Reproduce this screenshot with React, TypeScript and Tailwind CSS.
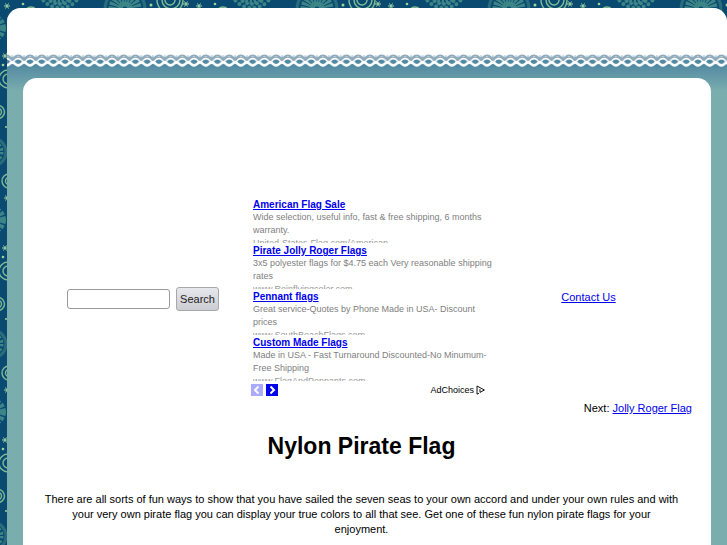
const ads = [
  {
    title: "American Flag Sale",
    text: "Wide selection, useful info, fast & free shipping, 6 months warranty.",
    url: "United-States-Flag.com/American",
  },
  {
    title: "Pirate Jolly Roger Flags",
    text: "3x5 polyester flags for $4.75 each Very reasonable shipping rates",
    url: "www.Reinflyingcolor.com",
  },
  {
    title: "Pennant flags",
    text: "Great service-Quotes by Phone Made in USA- Discount prices",
    url: "www.SouthBeachFlags.com",
  },
  {
    title: "Custom Made Flags",
    text: "Made in USA - Fast Turnaround Discounted-No Minumum-Free Shipping",
    url: "www.FlagAndPennants.com",
  },
];

const Star = ({ x, y }: { x: number; y: number }) => (
  <path
    d={`M${x - 3} ${y}h6M${x - 1.5} ${y - 2.5}l3 5M${x + 1.5} ${y - 2.5}l-3 5`}
    stroke="#9fd0a0"
    strokeWidth="1"
  />
);

// repeating batik print behind the page
const Backdrop = () => (
  <svg className="absolute inset-0 -z-10 h-full w-full" aria-hidden="true">
    <defs>
      <pattern id="batik" width="192" height="192" patternUnits="userSpaceOnUse">
        <rect width="192" height="192" fill="#0b4a70" />
        <g fill="none" stroke="#3b8587">
          {/* dotted flower */}
          <circle cx="60" cy="-12" r="16" strokeWidth="4" strokeDasharray="0 5" strokeLinecap="round" />
          <circle cx="60" cy="-14" r="22" strokeWidth="4" strokeDasharray="0 5.3" strokeLinecap="round" />
          <circle cx="60" cy="-9" r="9" strokeWidth="8" strokeDasharray="2 1.5" />
          {/* sun wheel */}
          <circle cx="125" cy="9" r="20" strokeWidth="3" stroke="#2a6b7c" />
          <circle cx="125" cy="9" r="11" strokeWidth="11" strokeDasharray="2.4 1" />
          <circle cx="125" cy="9" r="5" strokeWidth="5" />
          {/* half medallion on the left edge */}
          <circle cx="-8" cy="152" r="14" strokeWidth="3" stroke="#2a6b7c" />
          <circle cx="-8" cy="152" r="8" strokeWidth="7" strokeDasharray="2 1.6" />
          <circle cx="-8" cy="28" r="8" strokeWidth="12" strokeDasharray="2.4 1" />
        </g>
        <g fill="none" stroke="#7fbb97" strokeWidth="1.4">
          <circle cx="170" cy="0" r="13" />
          <circle cx="171" cy="0" r="9" />
          <circle cx="170" cy="0" r="5" />
          <circle cx="31" cy="13" r="6" />
          <circle cx="8" cy="79" r="9" />
          <circle cx="8" cy="79" r="5" />
          <circle cx="-2" cy="112" r="6.5" />
          <circle cx="-2" cy="112" r="3.5" />
          <circle cx="9" cy="181" r="7" />
          <circle cx="9" cy="181" r="3.5" />
        </g>
        <g fill="#9fd0a0">
          <circle cx="151" cy="5" r="1.5" />
          <circle cx="23" cy="4" r="1.3" />
          <circle cx="3" cy="65" r="1.3" />
          <circle cx="6" cy="127" r="1" />
        </g>
        <Star x={7} y={6} />
        <Star x={186} y={4} />
        <Star x={5} y={56} />
      </pattern>
    </defs>
    <rect width="100%" height="100%" fill="url(#batik)" />
  </svg>
);

const Lace = () => (
  <svg className="block h-[13px] w-full" aria-hidden="true">
    <defs>
      <pattern id="lace" x="5.4" width="11.72" height="13" patternUnits="userSpaceOnUse">
        <rect width="11.72" height="13" fill="#fff" />
        <path d="M0 3h11.72v5H0z" fill="#8eabbb" />
        <path d="M0 7.5h11.72V13H0z" fill="#5089a2" />
        <path d="M1.6 3.6Q5.86-.6 10.1 3.6" fill="none" stroke="#8eabbb" strokeWidth="2" />
        <path d="M.5 1.2v2M11.2 1.2v2" stroke="#c5d2db" />
        <path d="M0 7Q1.6 6.8 2.6 5 5.86 2.4 9.1 5 10 6.8 11.72 7V9.8Q10 10.2 9 11.6 5.86 14 2.7 11.6 1.7 10.2 0 9.8z" fill="#fff" />
        <path d="M2.2 7.6Q3.6 5.4 5.86 5.4T9.5 7.6Q8.2 10 5.86 10T2.2 7.6z" fill="#5089a2" />
      </pattern>
    </defs>
    <rect width="100%" height="13" fill="url(#lace)" />
  </svg>
);

const SearchForm = () => (
  <form className="flex items-center justify-center gap-1.5 pt-1 pl-1" onSubmit={(e) => e.preventDefault()}>
    <input
      type="text"
      aria-label="Search"
      className="h-5 w-[103px] rounded-[3px] border border-[#999] bg-white px-1 text-xs"
    />
    <button
      type="submit"
      className="h-6 w-[43px] rounded-[3px] border border-[#a8a8a8] bg-linear-to-b from-[#e6e8ee] to-[#cccdd2] text-[11px] text-[#222]"
    >
      Search
    </button>
  </form>
);

const AdBlock = () => (
  <div className="pl-0.5">
    {ads.map((ad) => (
      <div key={ad.title} className="mb-px h-[45px] overflow-hidden text-[9px] leading-[13px] text-[#808080]">
        <a href="#" className="block text-[10px] font-bold text-[#0000ee] underline">
          {ad.title}
        </a>
        <p>{ad.text}</p>
        <p className="text-[#999]">{ad.url}</p>
      </div>
    ))}
    <div className="mt-[3px] -ml-0.5 flex items-center gap-[3px] pr-3">
      <button aria-label="Previous ads" className="flex size-3 items-center justify-center bg-[#aaaaff]">
        <svg viewBox="0 0 12 12" className="size-3" fill="none" stroke="#fff" strokeWidth="2">
          <path d="M7.5 2.5 4 6l3.5 3.5" />
        </svg>
      </button>
      <button aria-label="Next ads" className="flex size-3 items-center justify-center bg-[#0000ee]">
        <svg viewBox="0 0 12 12" className="size-3" fill="none" stroke="#fff" strokeWidth="2">
          <path d="M4.5 2.5 8 6 4.5 9.5" />
        </svg>
      </button>
      <a href="#" className="ml-auto flex items-center gap-px text-[9px] leading-3 text-black">
        AdChoices
        <svg viewBox="0 0 10 10" className="size-2.5" fill="none" stroke="#111">
          <path d="M4 8.2 2 9.2V1l7.4 4L5 7.4V4.2" />
        </svg>
      </a>
    </div>
  </div>
);

const App = () => {
  return (
    <div className="relative isolate min-h-screen overflow-hidden pt-2 pl-[7px] font-['Liberation_Sans',Arial,sans-serif] text-[11px] text-black">
      <Backdrop />
      <div className="flex min-h-screen flex-col overflow-hidden rounded-t-[14px] bg-[#7aadae]">
        <header className="bg-white pt-[46px]">
          <Lace />
        </header>
        <div className="flex grow flex-col bg-linear-to-b from-[#568da3] to-[#7aadae] to-[24px] px-4 pt-[11px]">
          <main className="grow rounded-t-[14px] bg-white pr-[19px] pl-2 pt-[120px]">
            <div className="grid grid-cols-[1fr_246px_195px] items-center">
              <SearchForm />
              <AdBlock />
              <div className="pr-3 text-center">
                <a href="#" className="text-[#0000ee] underline">
                  Contact Us
                </a>
              </div>
            </div>
            <p className="mt-[5px] text-right leading-[15px]">
              Next:{" "}
              <a href="#" className="text-[#0000ee] underline">
                Jolly Roger Flag
              </a>
            </p>
            <h1 className="mt-4 text-center text-[23px] leading-7 font-bold">Nylon Pirate Flag</h1>
            <p className="mt-8 text-center leading-[15px]">
              There are all sorts of fun ways to show that you have sailed the seven seas to your own accord and
              under your own rules and with
              <br />
              your very own pirate flag you can display your true colors to all that see. Get one of these fun nylon
              pirate flags for your
              <br />
              enjoyment.
            </p>
          </main>
        </div>
      </div>
    </div>
  );
};

export default App;
